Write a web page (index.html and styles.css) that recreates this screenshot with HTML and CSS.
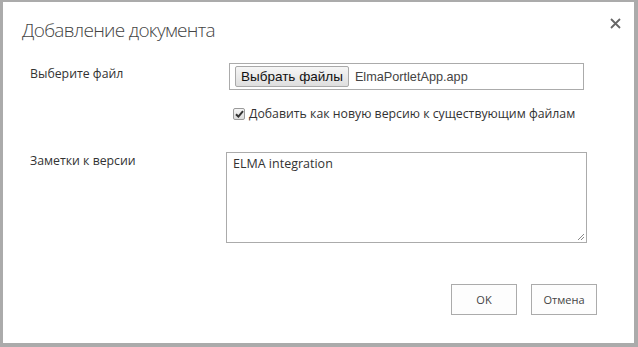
FILE: index.html
```html
<!DOCTYPE html>
<html lang="ru">
<head>
<meta charset="utf-8">
<title>Добавление документа</title>
<link rel="stylesheet" href="styles.css">
</head>
<body>
<div class="dialog">
  <div class="header">
    <h1 class="title">Добавление документа</h1>
    <span class="close" aria-label="Закрыть">
      <svg width="11" height="11" viewBox="0 0 11 11"><path d="M1 1L10 10M10 1L1 10" stroke="#666" stroke-width="1.8" fill="none"/></svg>
    </span>
  </div>
  <div class="form">
    <div class="row row-file">
      <div class="label">Выберите файл</div>
      <div class="field">
        <div class="file-input">
          <span class="file-btn">Выбрать файлы</span>
          <span class="file-name">ElmaPortletApp.app</span>
        </div>
        <label class="check">
          <span class="checkbox"><svg width="9" height="8" viewBox="0 0 9 8"><path d="M1 4.2L3.4 6.6L8 1.2" stroke="#333" stroke-width="2" fill="none"/></svg></span>
          <span>Добавить как новую версию к существующим файлам</span>
        </label>
      </div>
    </div>
    <div class="row row-notes">
      <div class="label">Заметки к версии</div>
      <div class="field">
        <div class="textarea">ELMA integration
          <svg class="grip" width="8" height="8" viewBox="0 0 8 8"><path d="M7 1L1 7M7 4L4 7" stroke="#888" stroke-width="1" fill="none"/></svg>
        </div>
      </div>
    </div>
  </div>
  <div class="actions">
    <span class="btn">OK</span>
    <span class="btn">Отмена</span>
  </div>
</div>
</body>
</html>
```

FILE: styles.css
```css
html, body {
  margin: 0;
  padding: 0;
  background: #ffffff;
}
.dialog {
  box-sizing: border-box;
  width: 638px;
  height: 347px;
  border-style: solid;
  border-color: #ababab;
  border-width: 2px 4px 4px 3px;
  background: #fff;
  font-family: "Open Sans", "Liberation Sans", sans-serif;
  color: #444;
  display: flex;
  flex-direction: column;
}
.header {
  display: flex;
  justify-content: space-between;
  align-items: flex-start;
  padding: 15px 13px 0 19px;
  height: 44px;
  box-sizing: border-box;
}
.title {
  margin: 0;
  font-weight: 300;
  font-size: 19px;
  line-height: 27px;
  color: #444;
  letter-spacing: -0.7px;
}
.close {
  margin-top: 1px;
  display: block;
  line-height: 0;
}
.form {
  padding: 17px 0 0 27px;
  display: flex;
  flex-direction: column;
}
.row {
  display: grid;
  grid-template-columns: 196px 1fr;
}
.label {
  font-size: 12.3px;
  color: #333;
  line-height: 18px;
}
.row-file .label { padding-top: 2px; }
.file-input {
  box-sizing: border-box;
  width: 355px;
  height: 27px;
  border: 1px solid #ababab;
  margin-left: 3px;
  display: flex;
  align-items: center;
  padding-left: 5px;
  font-family: "Liberation Sans", Arial, sans-serif;
  font-size: 12.7px;
  color: #444;
  white-space: nowrap;
}
.file-btn {
  box-sizing: border-box;
  height: 21px;
  padding: 0 5px;
  border: 1px solid #a9a9a9;
  border-radius: 2px;
  background: linear-gradient(#f6f6f6, #dedede);
  color: #111;
  line-height: 19px;
  font-size: 13.5px;
  text-align: center;
  white-space: nowrap;
}
.file-name {
  margin-left: 6px;
}
.check {
  display: flex;
  align-items: center;
  margin: 15px 0 0 7px;
  font-size: 12.3px;
  color: #333;
}
.checkbox {
  box-sizing: border-box;
  width: 12px;
  height: 12px;
  border: 1px solid #9a9a9a;
  border-radius: 2px;
  background: linear-gradient(#f5f5f5, #dcdcdc);
  display: flex;
  align-items: center;
  justify-content: center;
  margin-right: 4px;
}
.row-notes {
  margin-top: 30px;
}
.row-notes .label { padding-top: 0; }
.textarea {
  position: relative;
  box-sizing: border-box;
  width: 361px;
  height: 91px;
  border: 1px solid #ababab;
  padding: 2px 6px;
  font-size: 12.5px;
  line-height: 18px;
  color: #333;
}
.grip {
  position: absolute;
  right: 1px;
  bottom: 1px;
}
.actions {
  margin-top: auto;
  display: flex;
  justify-content: flex-end;
  gap: 14px;
  padding: 0 37px 28px 0;
}
.btn {
  box-sizing: border-box;
  width: 66px;
  height: 31px;
  border: 1px solid #ababab;
  background: #fdfdfd;
  font-size: 11px;
  color: #444;
  display: flex;
  align-items: center;
  justify-content: center;
}
```
